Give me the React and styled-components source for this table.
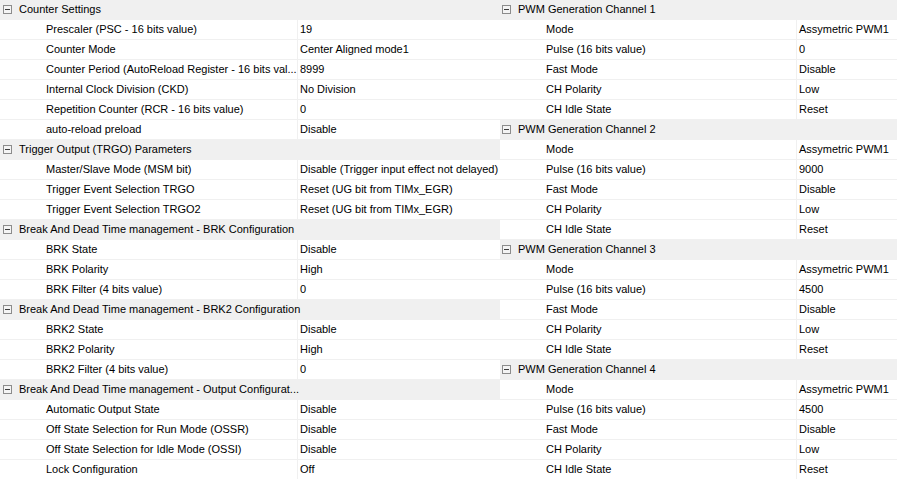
import React from "react";
import styled, { createGlobalStyle } from "styled-components";

const GlobalStyle = createGlobalStyle`
  html, body {
    margin: 0;
    padding: 0;
    background: #ffffff;
  }
  body {
    font-family: "Liberation Sans", Arial, sans-serif;
    font-size: 11px;
    color: #000000;
  }
`;

const left = [
  { cat: "Counter Settings" },
  { name: "Prescaler (PSC - 16 bits value)", value: "19" },
  { name: "Counter Mode", value: "Center Aligned mode1" },
  { name: "Counter Period (AutoReload Register - 16 bits val...", value: "8999" },
  { name: "Internal Clock Division (CKD)", value: "No Division" },
  { name: "Repetition Counter (RCR - 16 bits value)", value: "0" },
  { name: "auto-reload preload", value: "Disable" },
  { cat: "Trigger Output (TRGO) Parameters" },
  { name: "Master/Slave Mode (MSM bit)", value: "Disable (Trigger input effect not delayed)" },
  { name: "Trigger Event Selection TRGO", value: "Reset (UG bit from TIMx_EGR)" },
  { name: "Trigger Event Selection TRGO2", value: "Reset (UG bit from TIMx_EGR)" },
  { cat: "Break And Dead Time management - BRK Configuration" },
  { name: "BRK State", value: "Disable" },
  { name: "BRK Polarity", value: "High" },
  { name: "BRK Filter (4 bits value)", value: "0" },
  { cat: "Break And Dead Time management - BRK2 Configuration" },
  { name: "BRK2 State", value: "Disable" },
  { name: "BRK2 Polarity", value: "High" },
  { name: "BRK2 Filter (4 bits value)", value: "0" },
  { cat: "Break And Dead Time management - Output Configurat..." },
  { name: "Automatic Output State", value: "Disable" },
  { name: "Off State Selection for Run Mode (OSSR)", value: "Disable" },
  { name: "Off State Selection for Idle Mode (OSSI)", value: "Disable" },
  { name: "Lock Configuration", value: "Off" },
];

const channel = (n, pulse) => [
  { cat: `PWM Generation Channel ${n}` },
  { name: "Mode", value: "Assymetric PWM1" },
  { name: "Pulse (16 bits value)", value: pulse },
  { name: "Fast Mode", value: "Disable" },
  { name: "CH Polarity", value: "Low" },
  { name: "CH Idle State", value: "Reset" },
];

const right = [
  ...channel(1, "0"),
  ...channel(2, "9000"),
  ...channel(3, "4500"),
  ...channel(4, "4500"),
];

// layout
const Page = styled.div`
  display: flex;
  width: 897px;
`;

const Panel = styled.div`
  display: flex;
  flex-direction: column;
  width: ${(p) => p.$width};
  flex: ${(p) => (p.$width === "auto" ? 1 : "none")};
`;

// rows
const Row = styled.div`
  display: grid;
  grid-template-columns: ${(p) => p.$nameWidth}px 1fr;
  height: 19px;
  line-height: 19px;
  border-bottom: 1px solid #f0f0f0;
  &:last-child {
    border-bottom-color: transparent;
  }
`;

const NameCell = styled.div`
  padding-left: 46px;
  border-right: 1px solid #f0f0f0;
  white-space: nowrap;
  overflow: hidden;
`;

const ValueCell = styled.div`
  padding-left: 2px;
  white-space: nowrap;
  overflow: hidden;
`;

const CategoryRow = styled.div`
  display: flex;
  align-items: center;
  height: 19px;
  line-height: 19px;
  background: #f0f0f0;
  border-bottom: 1px solid #f0f0f0;
  padding-left: ${(p) => p.$iconLeft}px;
  white-space: nowrap;
  overflow: hidden;
`;

const Toggle = styled.svg`
  flex: none;
  width: 9px;
  height: 9px;
  margin-right: 7px;
`;

const MinusBox = () => (
  <Toggle viewBox="0 0 9 9">
    <rect x="0.5" y="0.5" width="8" height="8" fill="#f4f4f4" stroke="#8c8c8c" />
    <line x1="2" y1="4.5" x2="7" y2="4.5" stroke="#3c3c3c" />
  </Toggle>
);

const Grid = ({ rows, nameWidth, iconLeft, width }) => (
  <Panel $width={width}>
    {rows.map((r, i) =>
      r.cat ? (
        <CategoryRow key={i} $iconLeft={iconLeft}>
          <MinusBox />
          {r.cat}
        </CategoryRow>
      ) : (
        <Row key={i} $nameWidth={nameWidth}>
          <NameCell>{r.name}</NameCell>
          <ValueCell>{r.value}</ValueCell>
        </Row>
      )
    )}
  </Panel>
);

export default function App() {
  return (
    <>
      <GlobalStyle />
      <Page>
        <Grid rows={left} nameWidth={298} iconLeft={3} width="500px" />
        <Grid rows={right} nameWidth={297} iconLeft={2} width="auto" />
      </Page>
    </>
  );
}
